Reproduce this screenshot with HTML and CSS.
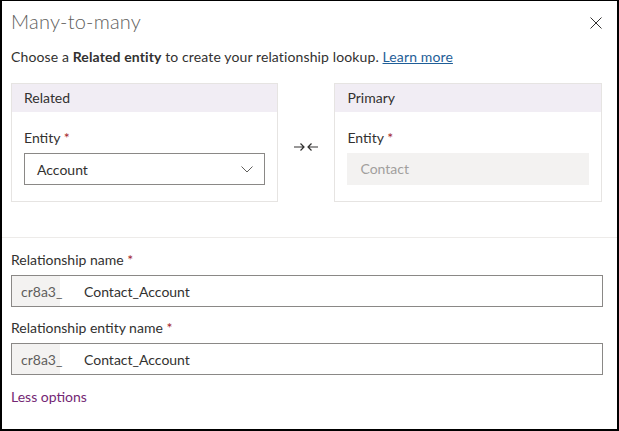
FILE: index.html
```html
<!DOCTYPE html>
<html>
<head>
<meta charset="utf-8">
<link rel="stylesheet" href="styles.css">
</head>
<body>
<div class="dialog">
  <div class="top">
    <div class="title-row">
      <h1 class="title">Many-to-many</h1>
      <svg class="close" width="12" height="12" viewBox="0 0 12 12"><path d="M0.5 0.5 L11.5 11.5 M11.5 0.5 L0.5 11.5" stroke="#323130" stroke-width="1" fill="none"/></svg>
    </div>
    <p class="desc">Choose a <b>Related entity</b> to create your relationship lookup. <a class="learn">Learn more</a></p>
    <div class="cards">
      <div class="card">
        <div class="card-head">Related</div>
        <div class="card-body">
          <div class="label">Entity <span class="req">*</span></div>
          <div class="select">
            <span>Account</span>
            <svg width="12" height="7" viewBox="0 0 12 7"><path d="M0.5 0.5 L6 6 L11.5 0.5" stroke="#605e5c" stroke-width="1" fill="none"/></svg>
          </div>
        </div>
      </div>
      <div class="arrows">
        <svg width="24" height="10" viewBox="0 0 24 10"><path d="M0 5 H10 M6.5 1.5 L10 5 L6.5 8.5 M24 5 H14 M17.5 1.5 L14 5 L17.5 8.5" stroke="#323130" stroke-width="1.2" fill="none"/></svg>
      </div>
      <div class="card wide">
        <div class="card-head">Primary</div>
        <div class="card-body">
          <div class="label">Entity <span class="req">*</span></div>
          <div class="disabled">Contact</div>
        </div>
      </div>
    </div>
  </div>
  <div class="bottom">
    <div class="label">Relationship name <span class="req">*</span></div>
    <div class="field"><span class="prefix">cr8a3_</span><span class="value">Contact_Account</span></div>
    <div class="label second">Relationship entity name <span class="req">*</span></div>
    <div class="field"><span class="prefix">cr8a3_</span><span class="value">Contact_Account</span></div>
    <a class="less">Less options</a>
  </div>
</div>
</body>
</html>
```
FILE: styles.css
```css
* { box-sizing: border-box; }
html, body { margin: 0; padding: 0; background: #fff; }
body { font-family: "Lato", "Open Sans", sans-serif; font-size: 14px; color: #323130; }
.dialog {
  width: 619px; height: 431px;
  border: 2px solid #000; border-top-width: 1px;
  display: flex; flex-direction: column;
}
.top { padding: 6px 15px 35px 9px; border-bottom: 1px solid #edebe9; }
.title-row { display: flex; justify-content: space-between; align-items: center; height: 28px; }
.title { margin: 0; font-size: 20px; font-weight: 300; color: #605e5c; line-height: 28px; letter-spacing: 0.2px; }
.close { margin-top: 4px; }
.desc { margin: 12px 0 0; line-height: 20px; letter-spacing: 0.12px; }
.desc b { font-weight: 700; }
.learn { color: #1f5e97; text-decoration: underline; }
.cards { display: flex; align-items: flex-start; margin-top: 16px; }
.card { width: 267px; border: 1px solid #e6e4e2; }
.card.wide { width: 268px; }
.card-head { background: #f1edf4; height: 28px; line-height: 28px; padding-left: 12px; }
.card-body { padding: 16px 12px; }
.label { line-height: 20px; }
.req { color: #a4262c; }
.select {
  margin-top: 5px; height: 32px; border: 1px solid #8a8886;
  display: flex; align-items: center; justify-content: space-between;
  padding: 0 11px 0 12px;
}
.disabled {
  margin-top: 5px; height: 32px; background: #f3f2f1; color: #a19f9d;
  line-height: 32px; padding-left: 13px;
}
.arrows { width: 57px; display: flex; justify-content: center; padding-top: 59px; }
.bottom { padding: 12px 14px 0 9px; display: flex; flex-direction: column; }
.field {
  margin-top: 5px; height: 32px; border: 1px solid #8a8886; display: flex; align-items: stretch;
}
.prefix { background: #f3f2f1; color: #605e5c; width: 48px; display: flex; align-items: center; padding-left: 9px; }
.value { display: flex; align-items: center; padding-left: 24px; }
.label.second { margin-top: 11px; }
.less { margin-top: 12px; line-height: 20px; color: #742774; }
```
